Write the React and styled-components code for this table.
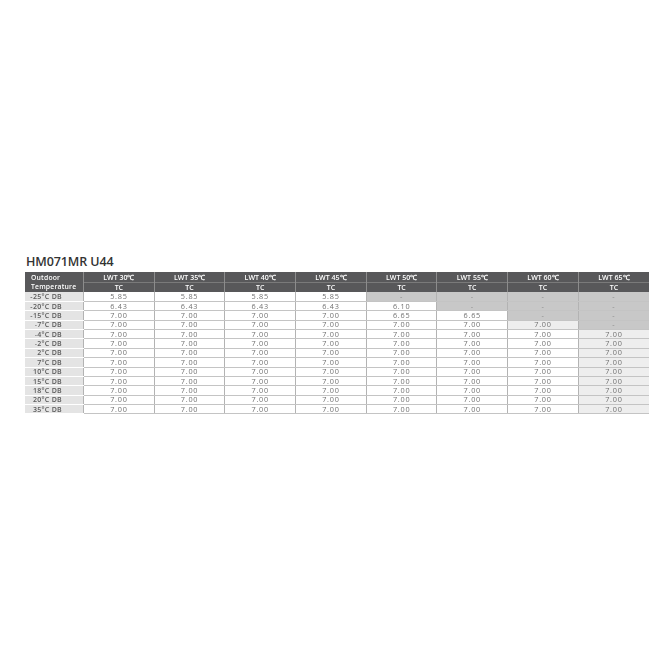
import React from 'react'
import styled, { createGlobalStyle } from 'styled-components'

const GlobalStyle = createGlobalStyle`
    html, body {
        margin: 0;
        padding: 0;
        background: #ffffff;
    }
    body {
        font-family: 'Open Sans', 'Liberation Sans', sans-serif;
    }
`

const Page = styled.div`
    width: 670px;
    height: 670px;
    box-sizing: border-box;
    padding: 254px 21px 0 25px;
`

const Title = styled.h1`
    margin: 0 0 3px 1px;
    font-size: 12.5px;
    line-height: 15px;
    font-weight: 600;
    color: #333333;
    letter-spacing: -0.1px;
`

const Sheet = styled.table`
    width: 624px;
    border-collapse: collapse;
    table-layout: fixed;
    font-size: 7px;
    will-change: transform;
`

const HeadRow = styled.tr`
    height: ${p => (p.$sub ? '9.5px' : '10.5px')};
`

const Row = styled.tr`
    height: 9.38px;
`

const HeadCell = styled.th`
    padding: 0;
    background: #58585a;
    color: #ffffff;
    font-weight: 600;
    text-align: center;
    line-height: 7px;
    border-left: 1px solid #8c8c8c;
    border-top: ${p => (p.$sub ? '1px solid #7a7a7a' : 'none')};
    white-space: nowrap;
`

const CornerCell = styled.th`
    padding: 0 0 0 6px;
    background: #58585a;
    color: #ffffff;
    font-size: 6.8px;
    font-weight: 600;
    text-align: left;
    line-height: 9.5px;
    letter-spacing: 0.2px;
`

const LabelCell = styled.td`
    padding: 0 21px 0 0;
    background: #e4e4e4;
    color: #5a5a5a;
    font-weight: 600;
    letter-spacing: 0.3px;
    text-align: right;
    line-height: 7px;
    border-bottom: 1px solid #ffffff;
    white-space: nowrap;
`

const tones = {
    plain: '#ffffff',
    light: '#eeeeee',
    off: '#c8c8c8',
}

const ValueCell = styled.td`
    padding: 0;
    background: ${p => tones[p.$tone]};
    color: ${p => (p.$tone === 'off' ? '#8a8a8a' : '#727272')};
    font-size: 7.3px;
    letter-spacing: 0.75px;
    text-align: center;
    line-height: 7px;
    border-left: 1px solid #b3b3b3;
    border-bottom: 1px solid #c4c4c4;
`

const temps = ['30', '35', '40', '45', '50', '55', '60', '65']

const full = Array(8).fill('7.00')

const rows = [
    { t: '-25°C DB', v: ['5.85', '5.85', '5.85', '5.85', '-', '-', '-', '-'] },
    { t: '-20°C DB', v: ['6.43', '6.43', '6.43', '6.43', '6.10', '-', '-', '-'] },
    { t: '-15°C DB', v: ['7.00', '7.00', '7.00', '7.00', '6.65', '6.65', '-', '-'] },
    { t: '-7°C DB', v: ['7.00', '7.00', '7.00', '7.00', '7.00', '7.00', '7.00', '-'], light: [6] },
    { t: '-4°C DB', v: full, light: [7] },
    { t: '-2°C DB', v: full, light: [7] },
    { t: '2°C DB', v: full, light: [7] },
    { t: '7°C DB', v: full, light: [7] },
    { t: '10°C DB', v: full, light: [7] },
    { t: '15°C DB', v: full, light: [7] },
    { t: '18°C DB', v: full, light: [7] },
    { t: '20°C DB', v: full, light: [7] },
    { t: '35°C DB', v: full, light: [7] },
]

const toneOf = (row, value, i) => {
    if (value === '-') return 'off'
    if (row.light && row.light.includes(i)) return 'light'
    return 'plain'
}

export default function App() {
    return (
        <>
            <GlobalStyle />
            <Page>
                <Title>HM071MR U44</Title>
                <Sheet>
                    <colgroup>
                        <col style={{ width: '58.5px' }} />
                        {temps.map(t => <col key={t} />)}
                    </colgroup>
                    <thead>
                        <HeadRow>
                            <CornerCell rowSpan={2}>Outdoor<br />Temperature</CornerCell>
                            {temps.map(t => (
                                <HeadCell key={t}>LWT {t}℃</HeadCell>
                            ))}
                        </HeadRow>
                        <HeadRow $sub>
                            {temps.map(t => (
                                <HeadCell key={t} $sub>TC</HeadCell>
                            ))}
                        </HeadRow>
                    </thead>
                    <tbody>
                        {rows.map(row => (
                            <Row key={row.t}>
                                <LabelCell>{row.t}</LabelCell>
                                {row.v.map((value, i) => (
                                    <ValueCell key={i} $tone={toneOf(row, value, i)}>
                                        {value}
                                    </ValueCell>
                                ))}
                            </Row>
                        ))}
                    </tbody>
                </Sheet>
            </Page>
        </>
    )
}
